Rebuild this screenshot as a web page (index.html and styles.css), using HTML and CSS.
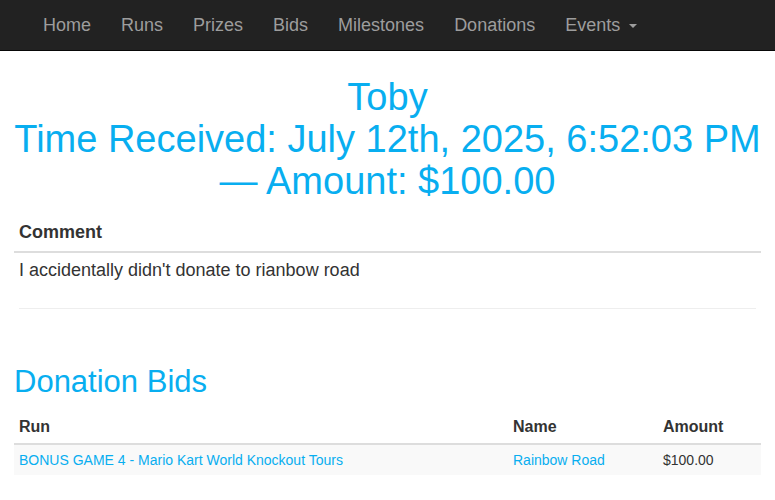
FILE: index.html
```
<!DOCTYPE html>
<html>
<head>
<meta charset="utf-8">
<link rel="stylesheet" href="styles.css">
</head>
<body>
<nav class="navbar">
  <ul class="nav">
    <li><a href="#">Home</a></li>
    <li><a href="#">Runs</a></li>
    <li><a href="#">Prizes</a></li>
    <li><a href="#">Bids</a></li>
    <li><a href="#">Milestones</a></li>
    <li><a href="#">Donations</a></li>
    <li><a href="#">Events <span class="caret"></span></a></li>
  </ul>
</nav>
<main class="container">
  <h1 class="title">Toby<br>Time Received: July 12th, 2025, 6:52:03 PM<br>— Amount: $100.00</h1>
  <table class="table comment-table">
    <thead><tr><th>Comment</th></tr></thead>
    <tbody><tr><td>I accidentally didn't donate to rianbow road</td></tr></tbody>
  </table>
  <div class="rule"></div>
  <h2 class="section">Donation Bids</h2>
  <table class="table bids-table">
    <thead>
      <tr><th class="col-run">Run</th><th class="col-name">Name</th><th class="col-amount">Amount</th></tr>
    </thead>
    <tbody>
      <tr>
        <td><a href="#">BONUS GAME 4 - Mario Kart World Knockout Tours</a></td>
        <td><a href="#">Rainbow Road</a></td>
        <td>$100.00</td>
      </tr>
    </tbody>
  </table>
</main>
</body>
</html>
```
FILE: styles.css
```
* { box-sizing: border-box; }
html, body { margin: 0; padding: 0; }
body {
  font-family: "Liberation Sans", Arial, Helvetica, sans-serif;
  font-size: 18px;
  line-height: 1.42857;
  color: #333;
  background: #fff;
}
a { color: #08aef0; text-decoration: none; }

.navbar {
  height: 51px;
  background: #222;
  border-bottom: 1px solid #080808;
  padding-left: 28px;
}
.nav {
  list-style: none;
  margin: 0;
  padding: 0;
  display: flex;
}
.nav a {
  display: block;
  padding: 0 15px;
  line-height: 50px;
  color: #9d9d9d;
  font-size: 18px;
}
.caret {
  display: inline-block;
  width: 0;
  height: 0;
  margin-left: 4px;
  vertical-align: middle;
  border-top: 4px solid #9d9d9d;
  border-left: 4px solid transparent;
  border-right: 4px solid transparent;
}

.container { padding: 0 14px; }

.title {
  margin: 25px 0 13px;
  text-align: center;
  font-weight: normal;
  font-size: 38px;
  line-height: 42px;
  color: #08aef0;
}

.table {
  width: 100%;
  border-collapse: collapse;
  border-spacing: 0;
}
.table th {
  text-align: left;
  font-weight: bold;
  padding: 5px;
  border-bottom: 2px solid #ddd;
}
.table td { padding: 5px; }

.comment-table th { font-size: 18px; }

.rule {
  margin: 20px 5px 0;
  border-top: 1px solid #eee;
}

.section {
  margin: 56px 0 11px;
  font-weight: normal;
  font-size: 31px;
  line-height: 1.1;
  color: #08aef0;
}

.bids-table th { font-size: 16px; }
.bids-table td { font-size: 14px; line-height: 20px; background: #f9f9f9; }
.col-name { width: 150px; }
.col-amount { width: 103px; }
```
